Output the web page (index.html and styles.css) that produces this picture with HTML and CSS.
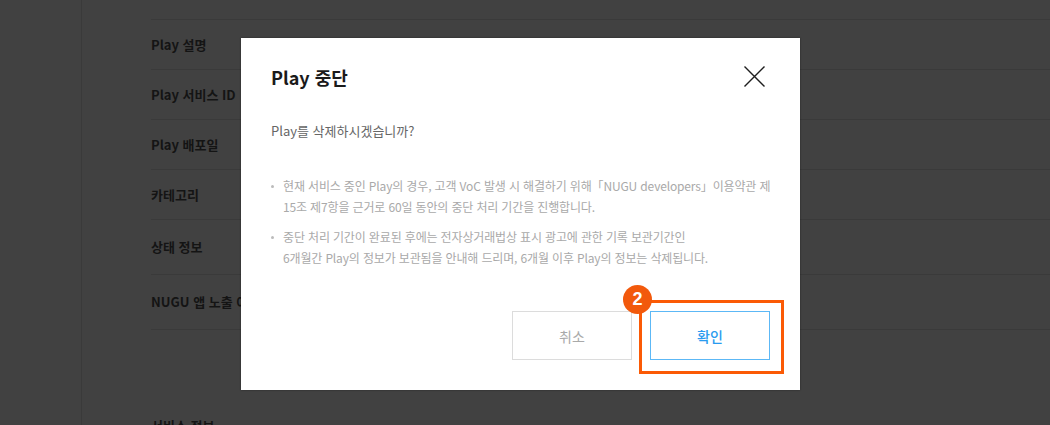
FILE: index.html
```html
<!DOCTYPE html>
<html lang="ko">
<head>
<meta charset="utf-8">
<title>Play 중단</title>
<link rel="stylesheet" href="styles.css">
</head>
<body>
<div class="page">
  <aside class="sidebar"></aside>
  <main class="content">
    <div class="row"><span class="label">Play 설명</span></div>
    <div class="row"><span class="label">Play 서비스 ID</span></div>
    <div class="row"><span class="label">Play 배포일</span></div>
    <div class="row"><span class="label">카테고리</span></div>
    <div class="row tall"><span class="label">상태 정보</span></div>
    <div class="row tall"><span class="label">NUGU 앱 노출 여부</span></div>
    <div class="row last"><span class="label">서비스 정보</span></div>
  </main>
</div>

<div class="modal">
  <div class="modal-head">
    <h2 class="modal-title">Play 중단</h2>
    <button class="close" aria-label="닫기">
      <svg width="21" height="21" viewBox="0 0 21 21"><path d="M0.5 0.5 L20.5 20.5 M20.5 0.5 L0.5 20.5" stroke="#1e1e1e" stroke-width="1.4" fill="none"/></svg>
    </button>
  </div>
  <p class="question">Play를 삭제하시겠습니까?</p>
  <ul class="notes">
    <li>현재 서비스 중인 Play의 경우, 고객 VoC 발생 시 해결하기 위해「NUGU developers」이용약관 제<br>15조 제7항을 근거로 60일 동안의 중단 처리 기간을 진행합니다.</li>
    <li>중단 처리 기간이 완료된 후에는 전자상거래법상 표시 광고에 관한 기록 보관기간인<br>6개월간 Play의 정보가 보관됨을 안내해 드리며, 6개월 이후 Play의 정보는 삭제됩니다.</li>
  </ul>
  <div class="actions">
    <button class="btn cancel">취소</button>
    <button class="btn confirm">확인</button>
  </div>
</div>

<div class="highlight"></div>
<div class="badge">2</div>
</body>
</html>
```

FILE: styles.css
```css
* { box-sizing: border-box; }
html, body { margin: 0; padding: 0; }
body {
  width: 1050px;
  height: 425px;
  overflow: hidden;
  background: #414141;
  font-family: "Noto Sans CJK KR", "Noto Sans", sans-serif;
  position: relative;
}
.page {
  display: flex;
  height: 425px;
}
.sidebar {
  width: 82px;
  flex: none;
  border-right: 1px solid #3a3a3a;
}
.content {
  flex: 1;
  padding: 19px 0 0 69px;
}
.row {
  height: 50px;
  border-top: 1px solid #3a3a3a;
  display: flex;
  align-items: center;
}
.row.tall { height: 55px; }
.row.last { height: 95px; align-items: flex-end; }
.label {
  font-size: 13px;
  font-weight: 700;
  color: #141414;
  line-height: 20px;
}
.row.last .label { transform: translateY(12px); }

.modal {
  position: absolute;
  left: 241px;
  top: 38px;
  width: 559px;
  height: 352px;
  background: #fff;
  padding: 26px 30px 30px 30px;
  box-shadow: 0 0 2px rgba(0,0,0,0.4);
  display: flex;
  flex-direction: column;
}
.modal-head {
  display: flex;
  justify-content: space-between;
  align-items: flex-start;
}
.modal-title {
  margin: 0;
  font-size: 18px;
  font-weight: 700;
  line-height: 26px;
  color: #1a1a1a;
}
.close {
  border: 0;
  background: none;
  padding: 0;
  margin: 2px 5px 0 0;
  width: 21px;
  height: 21px;
  display: block;
}
.close svg { display: block; }
.question {
  margin: 31px 0 0 0;
  font-size: 13px;
  line-height: 20px;
  color: #666;
}
.notes {
  list-style: none;
  margin: 34px 0 0 0;
  padding: 0;
}
.notes li {
  position: relative;
  padding-left: 12px;
  font-size: 12px;
  line-height: 21px;
  color: #a9a9a9;
  white-space: nowrap;
  letter-spacing: -0.15px;
}
.notes li + li { margin-top: 9px; }
.notes li::before {
  content: "";
  position: absolute;
  left: 0;
  top: 10px;
  width: 3px;
  height: 3px;
  border-radius: 50%;
  background: #bbb;
}
.actions {
  margin-top: auto;
  display: flex;
  justify-content: flex-end;
  gap: 18px;
}
.btn {
  width: 120px;
  height: 49px;
  background: #fff;
  font-family: inherit;
  font-size: 14px;
  cursor: pointer;
}
.cancel {
  border: 1px solid #dcdcdc;
  color: #a9a9a9;
}
.confirm {
  border: 1px solid #5cb8f6;
  color: #2a9bef;
  font-weight: 500;
}
.highlight {
  position: absolute;
  left: 639px;
  top: 300px;
  width: 145px;
  height: 74px;
  border: 3px solid #fb5a05;
}
.badge {
  position: absolute;
  left: 623px;
  top: 285px;
  width: 29px;
  height: 29px;
  border-radius: 50%;
  background: #f2590c;
  color: #fff;
  font-family: "Liberation Sans", Arial, sans-serif;
  font-weight: 700;
  font-size: 18px;
  line-height: 29px;
  text-align: center;
}
```
